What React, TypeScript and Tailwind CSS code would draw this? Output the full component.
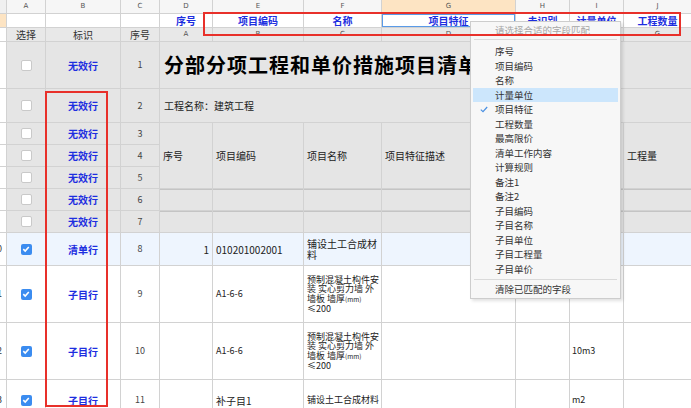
import React from "react";

const LETTERS = ["A", "B", "C", "D", "E", "F", "G", "H", "I", "J"];
const MAP_TEXT = ["", "", "", "序号", "项目编码", "名称", "项目特征", "未识别", "计量单位", "工程数量"];
const SRC_LETTERS = ["", "", "", "A", "B", "C", "D", "E", "F", "G"];
const MENU = [
  "序号", "项目编码", "名称", "计量单位", "项目特征", "工程数量", "最高限价", "清单工作内容",
  "计算规则", "备注1", "备注2", "子目编码", "子目名称", "子目单位", "子目工程量", "子目单价",
];

function Cell({ className = "", children }: { className?: string; children?: React.ReactNode }) {
  return <div className={"flex items-center overflow-hidden " + className}>{children}</div>;
}

function Check({ on }: { on: boolean }) {
  if (on)
    return (
      <div className="w-[11px] h-[11px] rounded-[2px] bg-[#3b8cf0] flex items-center justify-center">
        <svg width="8" height="8" viewBox="0 0 8 8" fill="none" stroke="white" strokeWidth="1.6">
          <polyline points="1.3,4.2 3.2,6 6.8,2" />
        </svg>
      </div>
    );
  return <div className="w-[11px] h-[11px] rounded-[2px] bg-white border border-[#c9c9c9]" />;
}

function Lead({ n, bg, on, kind, num }: { n?: string; bg: string; on: boolean; kind: string; num: number }) {
  return (
    <>
      <Cell className="bg-white text-[9px] text-[#333]">
        <span className="-ml-[3px]">{n}</span>
      </Cell>
      <Cell className={bg + " justify-center"}>
        <Check on={on} />
      </Cell>
      <Cell className={bg + " justify-center text-[10px] font-bold text-[#1d2ee0]"}>{kind}</Cell>
      <Cell className={bg + " justify-center text-[9px] text-[#444]"}>{num}</Cell>
    </>
  );
}

function LongName() {
  return (
    <Cell className="bg-white text-[9px] leading-[9.5px] text-[#222] pl-[3px] pr-[1px]">
      <span>
        预制混凝土构件安装 实心剪力墙 外墙板 墙厚<span className="text-[6.5px]">(mm)</span>
        <br />≤200
      </span>
    </Cell>
  );
}

export default function App() {
  const gray = "bg-[#e5e5e5]";
  const txt = "text-[10px] text-[#222] pl-[3px]";
  return (
    <div className="relative w-[691px] h-[408px] overflow-hidden bg-white font-['Noto_Sans_CJK_SC',sans-serif]">
      <div className="grid gap-px bg-[#d2d2d2] grid-cols-[6px_38px_74px_38px_52px_90px_77px_133px_53px_53px_67px] grid-rows-[13px_13px_13px_46px_33px_21px_21px_21px_21px_21px_32px_56px_56px_40px]">
        {/* column letters */}
        <Cell className="bg-[#f0f0f0]" />
        {LETTERS.map((l) => (
          <Cell
            key={l}
            className={
              (l === "G" ? "bg-[#fde4c3]" : "bg-[#f6f6f6]") +
              " justify-center text-[7px] text-[#555] font-['DejaVu_Sans',sans-serif]"
            }
          >
            {l}
          </Cell>
        ))}

        {/* field mapping row */}
        <Cell className="bg-[#fde4c3]" />
        {MAP_TEXT.map((t, i) => (
          <Cell
            key={i}
            className={
              (i === 6 ? "bg-white border border-[#5a9be8]" : "bg-white") +
              " justify-center text-[10px] font-bold text-[#1d2ee0]"
            }
          >
            {t}
          </Cell>
        ))}

        {/* sub header */}
        <Cell className="bg-white" />
        <Cell className="bg-[#e8e8e8] justify-center text-[10px] text-[#333]">选择</Cell>
        <Cell className="bg-[#e8e8e8] justify-center text-[10px] text-[#333]">标识</Cell>
        <Cell className="bg-[#e8e8e8] justify-center text-[10px] text-[#333]">序号</Cell>
        {SRC_LETTERS.slice(3).map((l) => (
          <Cell key={l} className="bg-[#e8e8e8] justify-center text-[7px] text-[#555] font-['DejaVu_Sans',sans-serif]">
            {l}
          </Cell>
        ))}

        {/* row 1 */}
        <Lead bg={gray} on={false} kind="无效行" num={1} />
        <Cell className={gray + " col-span-7 pl-[4px] text-[20px] font-bold text-black tracking-[1px] whitespace-nowrap"}>
          分部分项工程和单价措施项目清单与计价表
        </Cell>

        {/* row 2 */}
        <Lead bg={gray} on={false} kind="无效行" num={2} />
        <Cell className={gray + " col-span-7 " + txt + " pl-[4px] whitespace-nowrap"}>工程名称：建筑工程</Cell>

        {/* rows 3-5 with merged headers */}
        <Lead bg={gray} on={false} kind="无效行" num={3} />
        <Cell className={gray + " row-span-3 " + txt}>序号</Cell>
        <Cell className={gray + " row-span-3 " + txt}>项目编码</Cell>
        <Cell className={gray + " row-span-3 " + txt}>项目名称</Cell>
        <Cell className={gray + " row-span-3 " + txt}>项目特征描述</Cell>
        <Cell className={gray + " row-span-3 " + txt}>计量单位</Cell>
        <Cell className={gray + " row-span-3 " + txt}></Cell>
        <Cell className={gray + " row-span-3 " + txt}>工程量</Cell>
        <Lead bg={gray} on={false} kind="无效行" num={4} />
        <Lead bg={gray} on={false} kind="无效行" num={5} />

        {/* rows 6-7 */}
        <Lead bg={gray} on={false} kind="无效行" num={6} />
        {[0, 1, 2, 3, 4, 5, 6].map((k) => (
          <Cell key={k} className={gray + " border-t border-[#c4c4c4]"} />
        ))}
        <Lead bg={gray} on={false} kind="无效行" num={7} />
        {[0, 1, 2, 3, 4, 5, 6].map((k) => (
          <Cell key={k} className={gray + " border-t border-[#c4c4c4]"} />
        ))}

        {/* row 8 */}
        <Lead n="0" bg="bg-[#eef5fe]" on={true} kind="清单行" num={8} />
        <Cell className="bg-[#eef5fe] justify-end pr-[3px] text-[10px] text-[#222]">1</Cell>
        <Cell className={"bg-[#eef5fe] " + txt}>010201002001</Cell>
        <Cell className={"bg-[#eef5fe] " + txt + " leading-[11px]"}>铺设土工合成材料</Cell>
        <Cell className="bg-[#eef5fe]" />
        <Cell className="bg-[#eef5fe]" />
        <Cell className="bg-[#eef5fe]" />
        <Cell className="bg-[#eef5fe]" />

        {/* row 9 */}
        <Lead n="1" bg="bg-white" on={true} kind="子目行" num={9} />
        <Cell className="bg-white" />
        <Cell className="bg-white text-[9px] text-[#222] pl-[3px]">A1-6-6</Cell>
        <LongName />
        <Cell className="bg-white" />
        <Cell className="bg-white" />
        <Cell className="bg-white text-[9px] text-[#222] pl-[2px]">10m3</Cell>
        <Cell className="bg-white" />

        {/* row 10 */}
        <Lead n="2" bg="bg-white" on={true} kind="子目行" num={10} />
        <Cell className="bg-white" />
        <Cell className="bg-white text-[9px] text-[#222] pl-[3px]">A1-6-6</Cell>
        <LongName />
        <Cell className="bg-white" />
        <Cell className="bg-white" />
        <Cell className="bg-white text-[9px] text-[#222] pl-[2px]">10m3</Cell>
        <Cell className="bg-white" />

        {/* row 11 */}
        <Lead n="3" bg="bg-white" on={true} kind="子目行" num={11} />
        <Cell className="bg-white" />
        <Cell className={"bg-white " + txt}>补子目1</Cell>
        <Cell className="bg-white text-[9px] text-[#222] pl-[3px] whitespace-nowrap">铺设土工合成材料</Cell>
        <Cell className="bg-white" />
        <Cell className="bg-white" />
        <Cell className="bg-white text-[9px] text-[#222] pl-[2px]">m2</Cell>
        <Cell className="bg-white" />
      </div>

      {/* field picker menu */}
      <div className="absolute left-[470px] top-[21px] w-[151px] h-[278px] bg-[#f7f7f7] border border-[#cdcdcd] shadow-[2px_2px_3px_rgba(0,0,0,0.12)] flex flex-col text-[9.5px] text-[#333]">
        <div className="h-[16px] flex items-center pl-[24px] text-[#a6a6a6]">请选择合适的字段匹配</div>
        <div className="mx-[3px] mt-[1px] mb-[4px] h-px bg-[#dadada]" />
        {MENU.map((m) => (
          <div
            key={m}
            className={
              "relative h-[14.5px] mx-[2px] flex items-center pl-[22px] " + (m === "计量单位" ? "bg-[#cce6fc]" : "")
            }
          >
            {m === "项目特征" && (
              <svg className="absolute left-[7px] top-[4px]" width="8" height="7" viewBox="0 0 8 7" fill="none" stroke="#4a90e2" strokeWidth="1.2">
                <polyline points="0.8,3.6 3,5.6 7.2,1" />
              </svg>
            )}
            {m}
          </div>
        ))}
        <div className="mx-[3px] mt-[3px] h-px bg-[#dadada]" />
        <div className="h-[18px] flex items-center pl-[24px]">清除已匹配的字段</div>
      </div>

      {/* red highlight frames */}
      <div className="absolute left-[203px] top-[12px] w-[478px] h-[24px] border-2 border-[#e8302a]" />
      <div className="absolute left-[45px] top-[91px] w-[63px] h-[316px] border-2 border-[#e8302a]" />
    </div>
  );
}
